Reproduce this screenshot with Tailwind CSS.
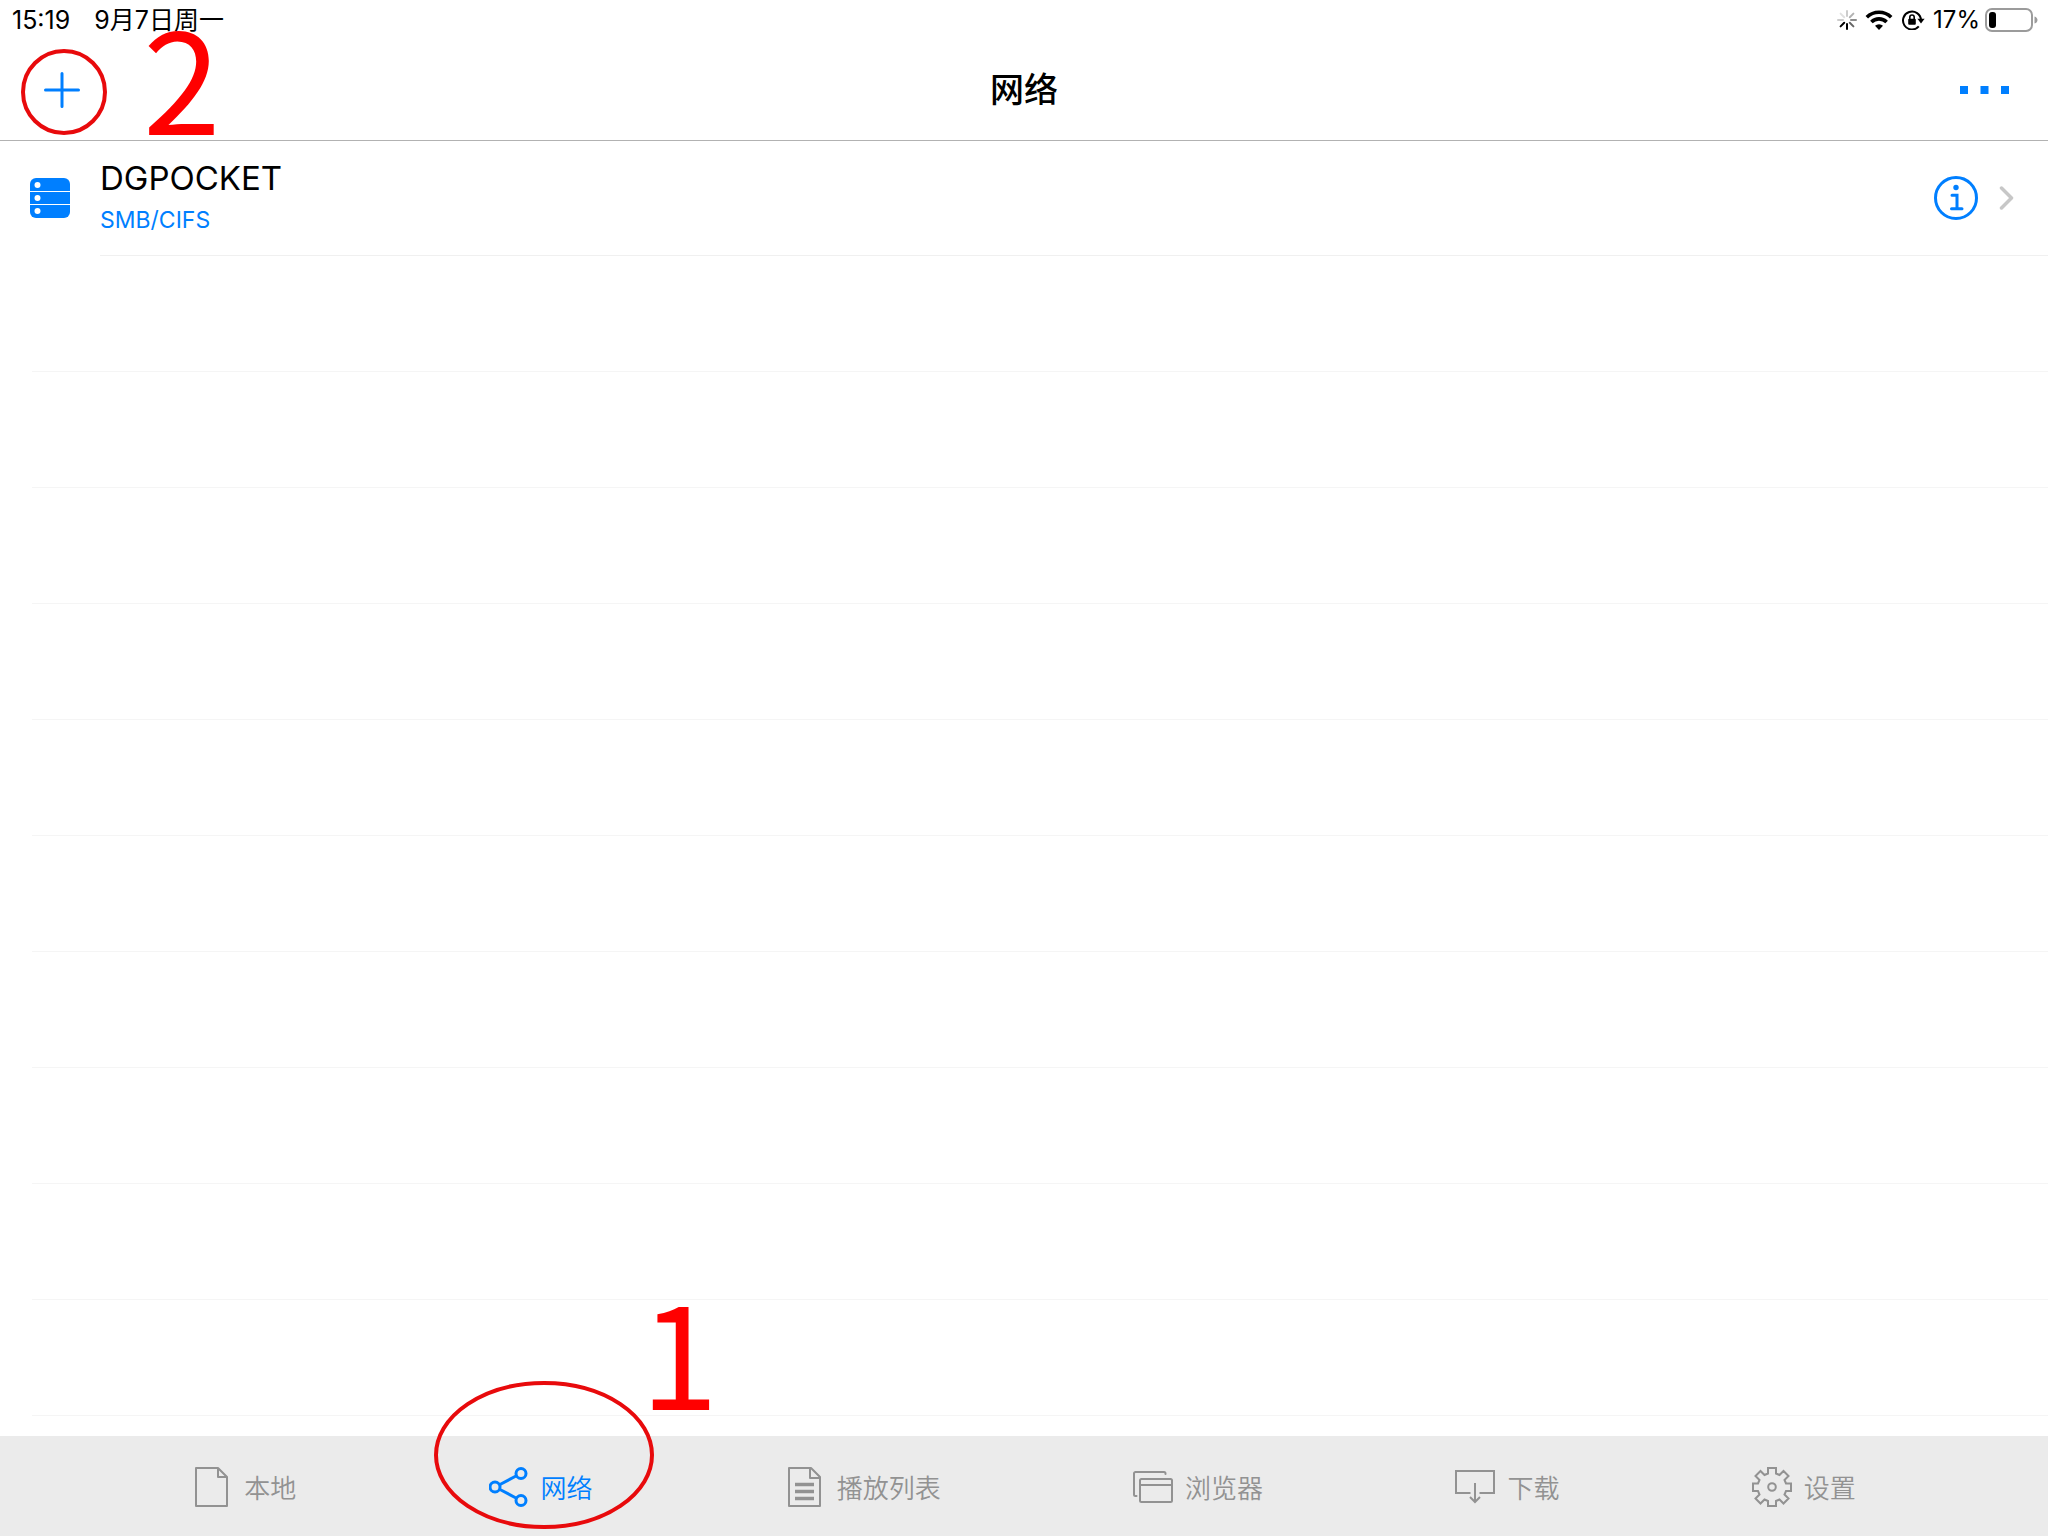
<!DOCTYPE html>
<html lang="zh-CN">
<head>
  <meta charset="UTF-8">
  <meta name="viewport" content="width=device-width, initial-scale=1.0">
  <title>网络</title>
  <script src="https://cdn.jsdelivr.net/npm/@tailwindcss/browser@4"></script>
</head>
<body class="relative h-screen flex flex-col overflow-hidden bg-white text-black font-[Inter,'Noto_Sans_CJK_SC',sans-serif]">

  <!-- STATUS BAR -->
  <div class="h-10 shrink-0 flex items-center justify-between pl-3 pr-2 text-[24px] leading-8">
    <div class="flex gap-6 text-[25px]">
      <span>15:19</span>
      <span>9月7日周一</span>
    </div>
    <div class="flex items-center">
      <svg class="size-5 mr-2" viewBox="0 0 20 20" fill="none" stroke="#000" stroke-width="2" stroke-linecap="round">
        <path d="M10 1v5" opacity=".2"/>
        <path d="M16.4 3.6l-3.6 3.6" opacity=".3"/>
        <path d="M19 10h-5" opacity=".45"/>
        <path d="M16.4 16.4l-3.6-3.6" opacity=".6"/>
        <path d="M10 19v-5"/>
        <path d="M3.6 16.4l3.6-3.6"/>
        <path d="M1 10h5" opacity=".2"/>
        <path d="M3.6 3.6l3.6 3.6" opacity=".12"/>
      </svg>
      <svg class="w-7 h-5 mr-2" viewBox="0 0 28 20" fill="none" stroke="#000" stroke-width="3.6">
        <path d="M1.8 7.2a17.4 17.4 0 0 1 24.4 0"/>
        <path d="M6.4 12a10.8 10.8 0 0 1 15.2 0"/>
        <path d="M14 20l-4-4.2a5.8 5.8 0 0 1 8 0z" fill="#000" stroke="none"/>
      </svg>
      <svg class="w-6 h-5 mr-2" viewBox="0 0 24 20" fill="none" stroke="#000" stroke-width="2">
        <path d="M17.8 16.4A9 9 0 1 1 20 10"/>
        <path d="M16.4 8.8h7.2L20 13.6z" fill="#000" stroke="none"/>
        <rect x="7.2" y="8.8" width="7.6" height="6" rx="1" fill="#000" stroke="none"/>
        <path d="M8.8 9V7.2a2.2 2.2 0 0 1 4.4 0V9" stroke-width="1.6"/>
      </svg>
      <span class="mr-1">17%</span>
      <svg class="w-14 h-6" viewBox="0 0 56 24" fill="none">
        <rect x="2" y="1" width="46" height="22" rx="6" stroke="#9b9b9b" stroke-width="2"/>
        <rect x="5" y="4" width="7" height="16" rx="3" fill="#000"/>
        <path d="M50.500 8.500c4 1 4 6 0 7z" fill="#9b9b9b"/>
      </svg>
    </div>
  </div>

  <!-- NAV BAR -->
  <header class="h-[101px] shrink-0 grid grid-cols-3 items-center border-b border-[#b2b2b2] px-9">
    <button type="button" aria-label="添加" class="justify-self-start size-13 flex items-center justify-center">
      <svg class="size-9" viewBox="0 0 36 36" fill="none" stroke="#007fff" stroke-width="3" stroke-linecap="round"><path d="M18 1.500v33M1.500 18h33"/></svg>
    </button>
    <h1 class="justify-self-center text-[34px] leading-none font-medium">网络</h1>
    <button type="button" aria-label="更多" class="justify-self-end h-13 flex items-center">
      <svg class="w-13 h-2" viewBox="0 0 52 8" fill="#007fff"><path d="M0 0h8v8H0zM20.500 0h8v8h-8zM41 0h8v8h-8z"/></svg>
    </button>
  </header>

  <!-- SERVER LIST -->
  <main class="flex-1 min-h-0 overflow-hidden">
    <ul>
      <li class="h-[115px] flex items-center pl-[30px]">
        <svg class="size-10 shrink-0 mb-px" viewBox="0 0 40 40">
          <rect width="40" height="40" rx="6" fill="#007fff"/>
          <path d="M0 13.500h40M0 26.500h40" stroke="#fff" stroke-width="1.200"/>
          <g fill="#fff"><circle cx="7.500" cy="7" r="3"/><circle cx="7.500" cy="20" r="3"/><circle cx="7.500" cy="33" r="3"/></g>
        </svg>
        <div class="ml-[30px] h-full flex-1 flex items-center justify-between border-b border-[#f0f0f0] pr-[34px]">
          <div class="pt-0.5">
            <div class="text-[33px] leading-[42px]">DGPOCKET</div>
            <div class="text-[23px] leading-[42px] text-[#007fff]">SMB/CIFS</div>
          </div>
          <div class="flex items-center gap-5">
            <button type="button" aria-label="详细信息">
              <svg class="size-11" viewBox="0 0 44 44" fill="none" stroke="#007fff" stroke-width="3">
                <circle cx="22" cy="22" r="20.500"/>
                <circle cx="22" cy="11.500" r="2.700" fill="#007fff" stroke="none"/>
                <path d="M18 19.300h5V32.500M17.500 32.700h10.500" stroke-linecap="round"/>
              </svg>
            </button>
            <svg class="w-4 h-6" viewBox="0 0 16 24" fill="none" stroke="#c7c7c7" stroke-width="3.500" stroke-linecap="round" stroke-linejoin="round"><path d="M3.500 2l10 10-10 10"/></svg>
          </div>
        </div>
      </li>
      <li class="h-29 ml-8 border-b border-[#f5f5f5]"></li>
      <li class="h-29 ml-8 border-b border-[#f5f5f5]"></li>
      <li class="h-29 ml-8 border-b border-[#f5f5f5]"></li>
      <li class="h-29 ml-8 border-b border-[#f5f5f5]"></li>
      <li class="h-29 ml-8 border-b border-[#f5f5f5]"></li>
      <li class="h-29 ml-8 border-b border-[#f5f5f5]"></li>
      <li class="h-29 ml-8 border-b border-[#f5f5f5]"></li>
      <li class="h-29 ml-8 border-b border-[#f5f5f5]"></li>
      <li class="h-29 ml-8 border-b border-[#f5f5f5]"></li>
      <li class="h-29 ml-8 border-b border-[#f5f5f5]"></li>
    </ul>
  </main>

  <!-- TAB BAR -->
  <nav class="h-25 shrink-0 flex items-center justify-evenly pt-0.5 bg-[#ebebeb] text-[26px] leading-10 text-[#929292] font-[350]">
    <button type="button" class="flex items-center gap-3">
      <svg class="size-10" viewBox="0 0 40 40" fill="none" stroke="currentColor" stroke-width="2" stroke-linejoin="round"><path d="M4 1h22l9 9v29H4zM26 1v9h9"/></svg>
      <span class="pt-1">本地</span>
    </button>
    <button type="button" class="relative flex items-center gap-3 text-[#007fff]">
      <svg class="size-10" viewBox="0 0 40 40" fill="none" stroke="currentColor" stroke-width="3"><circle cx="6" cy="20" r="5"/><circle cx="32" cy="6.500" r="5"/><circle cx="32" cy="33.500" r="5"/><path d="M11 17.500l16-8.500M11 22.500l16 8.500"/></svg>
      <span class="pt-1">网络</span>
      <svg class="absolute -left-[55px] -top-[84px] w-[220px] h-[148px] max-w-none pointer-events-none" viewBox="0 0 220 148" fill="none" stroke="#e80a0c" stroke-width="4"><ellipse cx="110" cy="74" rx="108" ry="72"/></svg>
      <span class="absolute left-[152px] -top-[186px] text-[140px] leading-none font-normal text-[#ff0000] font-['Noto_Sans_CJK_SC',sans-serif] pointer-events-none">1</span>
    </button>
    <button type="button" class="flex items-center gap-3">
      <svg class="size-10" viewBox="0 0 40 40" fill="none" stroke="currentColor" stroke-width="2" stroke-linejoin="round"><path d="M4 1h22l9 9v29H4zM25 1v10h10"/><path d="M10 17.500h19M10 24.500h19M10 31.500h19" stroke-width="3.500"/></svg>
      <span class="pt-1">播放列表</span>
    </button>
    <button type="button" class="flex items-center gap-3">
      <svg class="size-10" viewBox="0 0 40 40" fill="none" stroke="currentColor" stroke-width="2" stroke-linejoin="round" stroke-linecap="round"><rect x="7" y="12" width="32" height="23" rx="1.500"/><path d="M7 18h32M3.500 29H2.500a1.500 1.500 0 0 1-1.500-1.500V6.500A1.500 1.500 0 0 1 2.500 5H31a1.500 1.500 0 0 1 1.500 1.500V7"/></svg>
      <span class="pt-1">浏览器</span>
    </button>
    <button type="button" class="flex items-center gap-3">
      <svg class="size-10" viewBox="0 0 40 40" fill="none" stroke="currentColor" stroke-width="2"><path d="M15.500 26H1V4h38v22H24.500M20 16v19M15 30l5 5 5-5"/></svg>
      <span class="pt-1">下载</span>
    </button>
    <button type="button" class="flex items-center gap-3">
      <svg class="size-10" viewBox="0 0 40 40" fill="none" stroke="currentColor" stroke-width="2"><path d="M16 1h8v5.500l3.500 1.500 4-4 5 5-4 4 1.500 3.500H39v7.500h-5L32.500 27.500l4 4-5 5-4-4-3.500 1.500V39h-8v-5l-3.500-1.500-4 4-5-5 4-4L6 24H1v-7.500h5l1.500-3.500-4-4 5-5 4 4L16 6.500z"/><circle cx="20" cy="20" r="3.800"/></svg>
      <span class="pt-1">设置</span>
    </button>
  </nav>

  <!-- STEP 2 MARKER -->
  <svg class="absolute left-[21px] top-[49px] size-[86px] pointer-events-none" viewBox="0 0 86 86" fill="none" stroke="#e80a0c" stroke-width="4"><circle cx="43" cy="43" r="41"/></svg>
  <span class="absolute left-[143px] top-1 text-[140px] leading-none text-[#ff0000] font-['Noto_Sans_CJK_SC',sans-serif] pointer-events-none">2</span>
</body>
</html>
